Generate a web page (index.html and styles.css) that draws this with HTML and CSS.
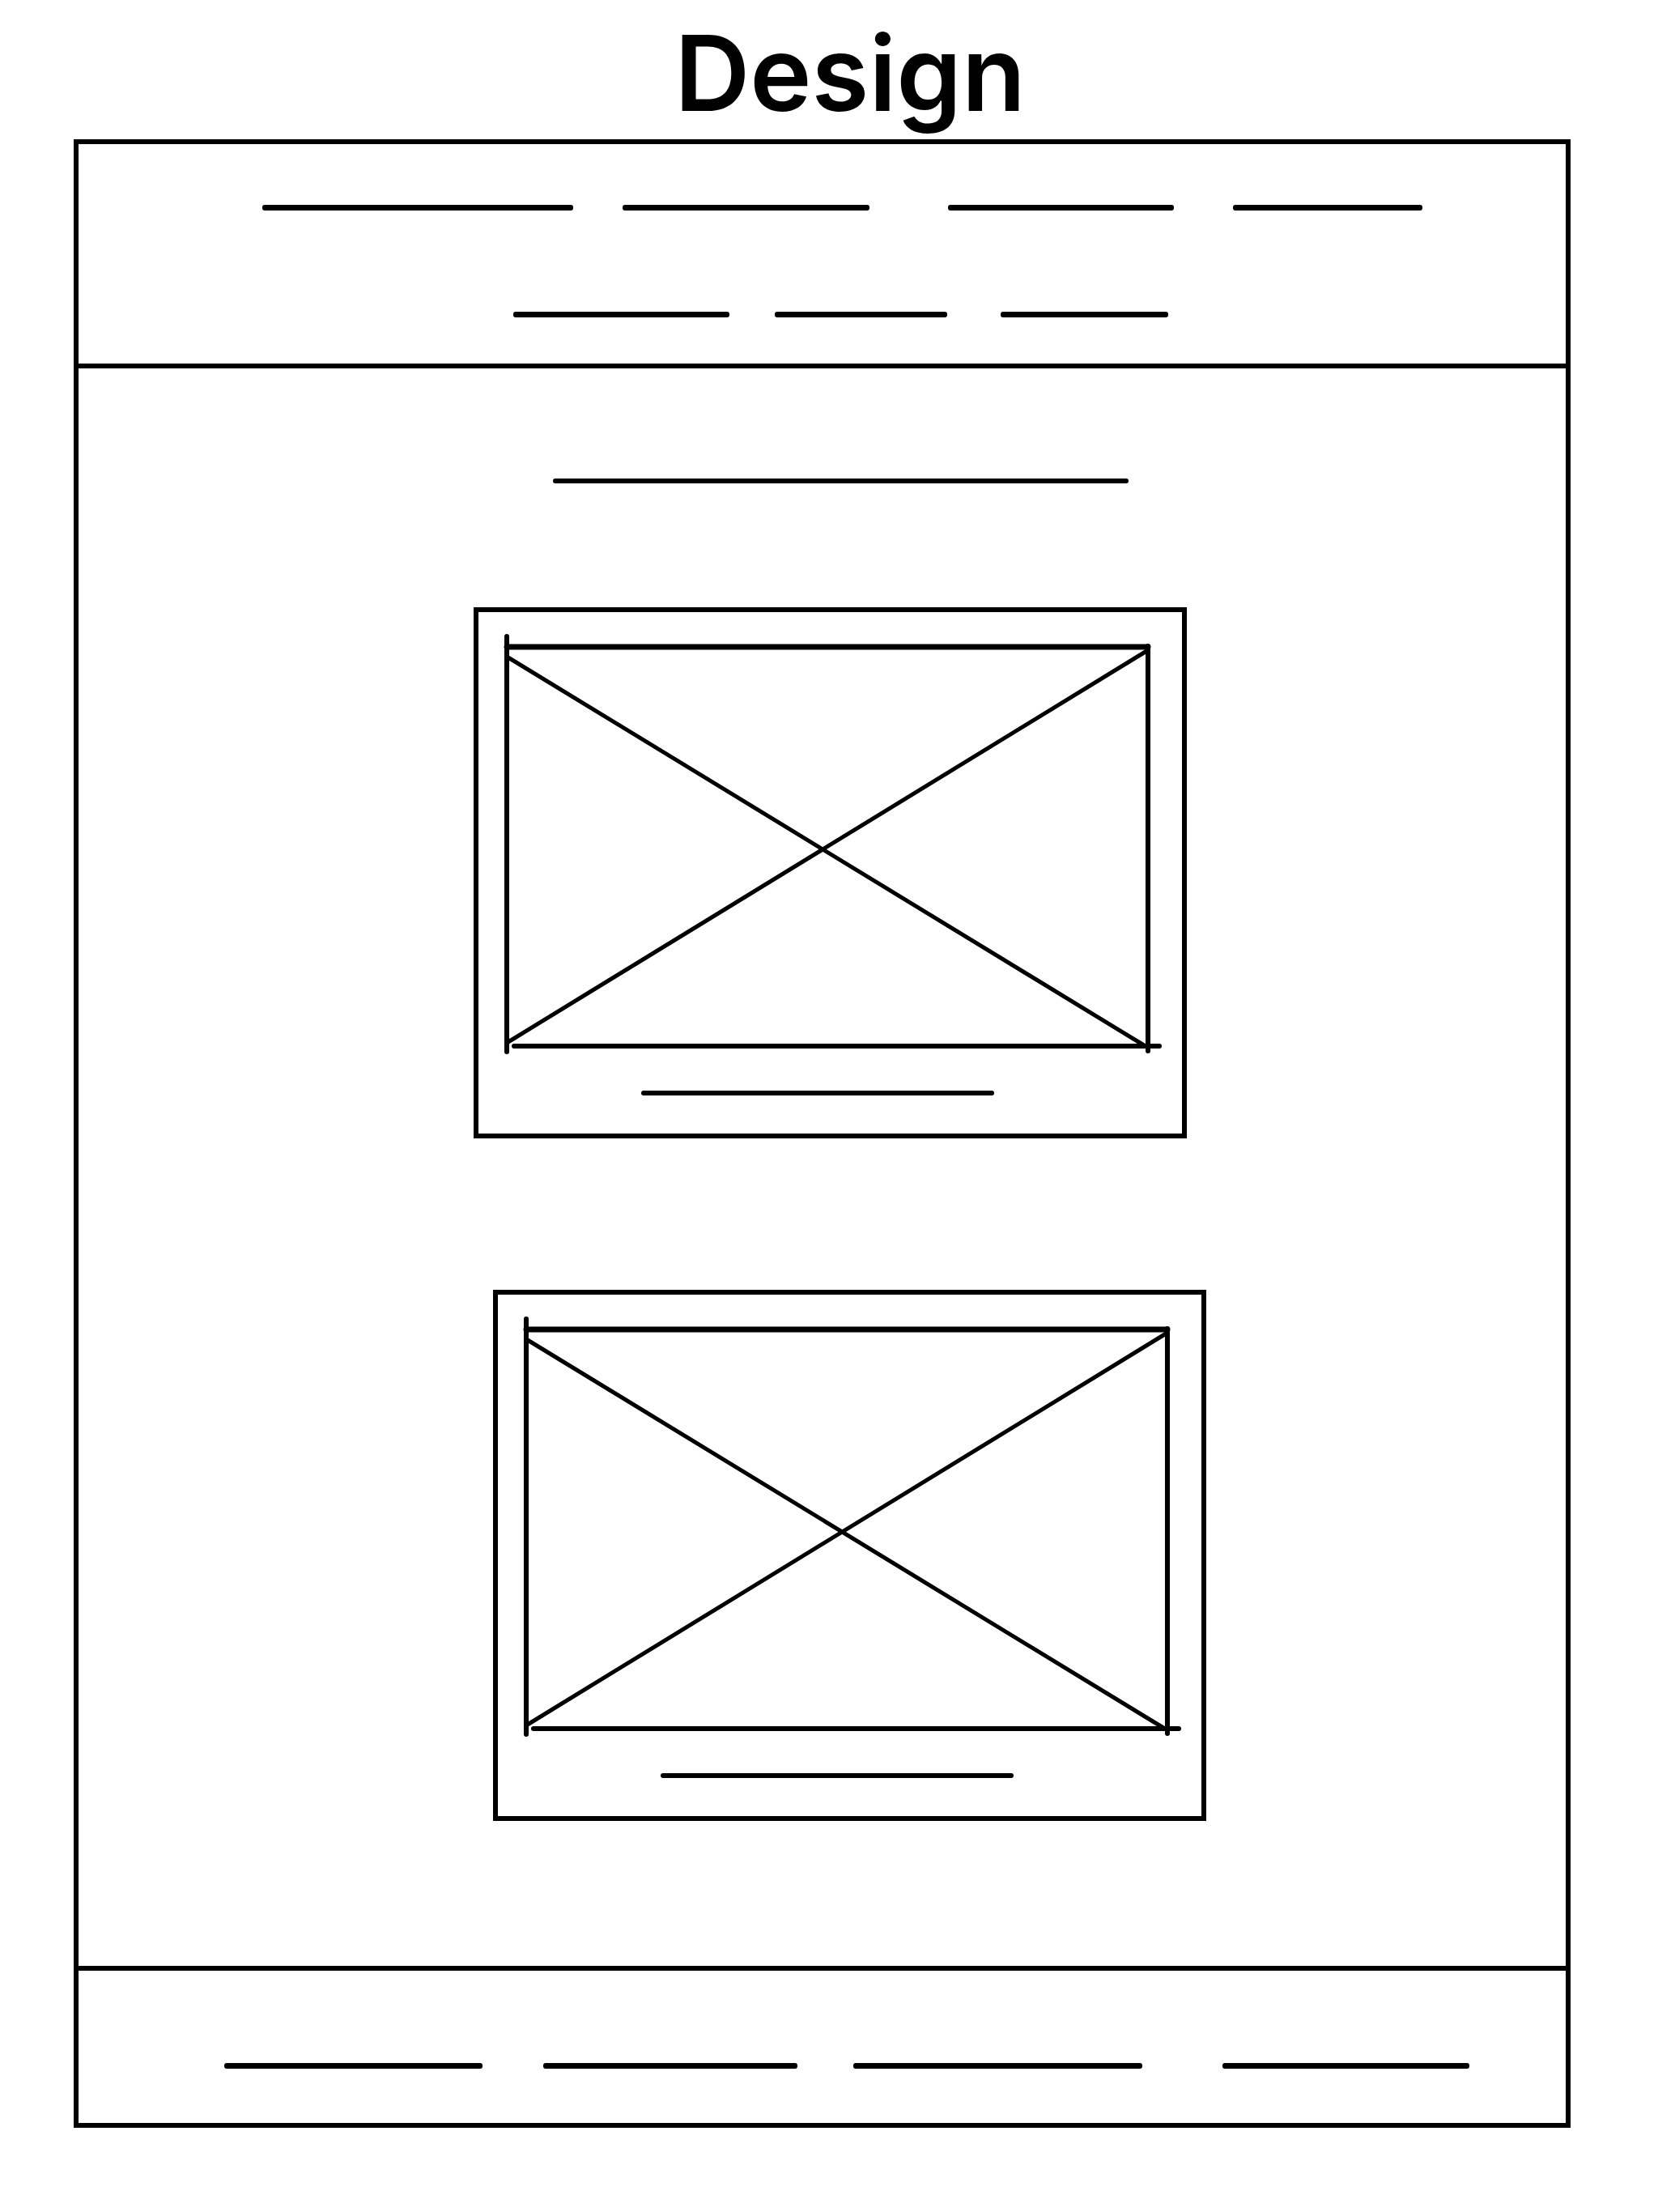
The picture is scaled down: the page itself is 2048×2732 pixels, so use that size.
FILE: index.html
```html
<!DOCTYPE html>
<html lang="en">
<head>
    <meta charset="UTF-8">
    <title>Design</title>
    <meta name="viewport" content="width=device-width, initial-scale=1.0">
    <link rel="stylesheet" href="styles.css">
</head>
<body>

<h1 class="page-title">Design</h1>

<div class="wireframe">
    <header class="site-nav">
        <div class="nav-row nav-row-1">
            <span class="bar"></span>
            <span class="bar"></span>
            <span class="bar"></span>
            <span class="bar"></span>
        </div>
        <div class="nav-row nav-row-2">
            <span class="bar"></span>
            <span class="bar"></span>
            <span class="bar"></span>
        </div>
    </header>

    <main class="content">
        <span class="bar heading-bar"></span>

        <div class="card card-1">
            <svg class="placeholder" viewBox="0 0 798 499" width="798" height="499">
                <g stroke="#000" stroke-linecap="round" fill="none">
                    <line x1="3" y1="3" x2="795" y2="3" stroke-width="7"/>
                    <line x1="3" y1="-10" x2="3" y2="503" stroke-width="6"/>
                    <line x1="795" y1="2" x2="795" y2="502" stroke-width="6"/>
                    <line x1="12" y1="496" x2="809" y2="496" stroke-width="6"/>
                    <line x1="3" y1="15" x2="795" y2="498" stroke-width="5"/>
                    <line x1="3" y1="492" x2="795" y2="7" stroke-width="5"/>
                </g>
            </svg>
            <span class="bar caption-bar"></span>
        </div>

        <div class="card card-2">
            <svg class="placeholder" viewBox="0 0 798 499" width="798" height="499">
                <g stroke="#000" stroke-linecap="round" fill="none">
                    <line x1="3" y1="3" x2="795" y2="3" stroke-width="7"/>
                    <line x1="3" y1="-10" x2="3" y2="503" stroke-width="6"/>
                    <line x1="795" y1="2" x2="795" y2="502" stroke-width="6"/>
                    <line x1="12" y1="496" x2="809" y2="496" stroke-width="6"/>
                    <line x1="3" y1="15" x2="795" y2="498" stroke-width="5"/>
                    <line x1="3" y1="492" x2="795" y2="7" stroke-width="5"/>
                </g>
            </svg>
            <span class="bar caption-bar"></span>
        </div>
    </main>

    <footer class="site-footer">
        <span class="bar"></span>
        <span class="bar"></span>
        <span class="bar"></span>
        <span class="bar"></span>
    </footer>
</div>

</body>
</html>
```

FILE: styles.css
```css
        body {
            margin: 0;
            background-color: #fff;
            font-family: Inter, 'Noto Sans', sans-serif;
            color: #000;
        }

        .page-title {
            margin: 0;
            padding: 26px 0 0 52px;
            font-size: 129px;
            font-weight: 600;
            line-height: 129px;
            text-align: center;
            letter-spacing: 0;
        }

        .wireframe {
            box-sizing: border-box;
            width: 1849px;
            margin: 17px 0 0 91px;
            border: 6px solid #000;
        }

        .bar {
            display: block;
            height: 7px;
            background-color: #000;
            border-radius: 3px;
            flex-shrink: 0;
        }

        /* header */
        .site-nav {
            display: flex;
            flex-direction: column;
            gap: 125px;
            padding: 75px 0 57px;
            border-bottom: 6px solid #000;
        }

        .nav-row {
            display: flex;
        }

        .nav-row-1 {
            padding-left: 227px;
        }

        .nav-row-1 .bar:nth-child(1) { width: 384px; }
        .nav-row-1 .bar:nth-child(2) { width: 305px; margin-left: 61px; }
        .nav-row-1 .bar:nth-child(3) { width: 279px; margin-left: 97px; }
        .nav-row-1 .bar:nth-child(4) { width: 234px; margin-left: 73px; }

        .nav-row-2 {
            padding-left: 537px;
        }

        .nav-row-2 .bar:nth-child(1) { width: 267px; }
        .nav-row-2 .bar:nth-child(2) { width: 213px; margin-left: 56px; }
        .nav-row-2 .bar:nth-child(3) { width: 207px; margin-left: 66px; }

        /* content */
        .content {
            display: flex;
            flex-direction: column;
            align-items: flex-start;
            padding: 136px 0 179px;
        }

        .heading-bar {
            width: 711px;
            height: 6px;
            margin-left: 586px;
        }

        .card {
            box-sizing: border-box;
            width: 881px;
            display: flex;
            flex-direction: column;
            align-items: flex-start;
            padding: 40px 0 47px 32px;
            border: 6px solid #000;
        }

        .card-1 {
            margin: 153px 0 0 488px;
        }

        .card-2 {
            margin: 187px 0 0 512px;
        }

        .placeholder {
            display: block;
            overflow: visible;
        }

        .caption-bar {
            width: 436px;
            height: 6px;
            margin: 52px 0 0 169px;
        }

        /* footer */
        .site-footer {
            display: flex;
            padding: 114px 0 67px 180px;
            border-top: 6px solid #000;
        }

        .site-footer .bar:nth-child(1) { width: 319px; }
        .site-footer .bar:nth-child(2) { width: 314px; margin-left: 75px; }
        .site-footer .bar:nth-child(3) { width: 357px; margin-left: 69px; }
        .site-footer .bar:nth-child(4) { width: 305px; margin-left: 99px; }
```
